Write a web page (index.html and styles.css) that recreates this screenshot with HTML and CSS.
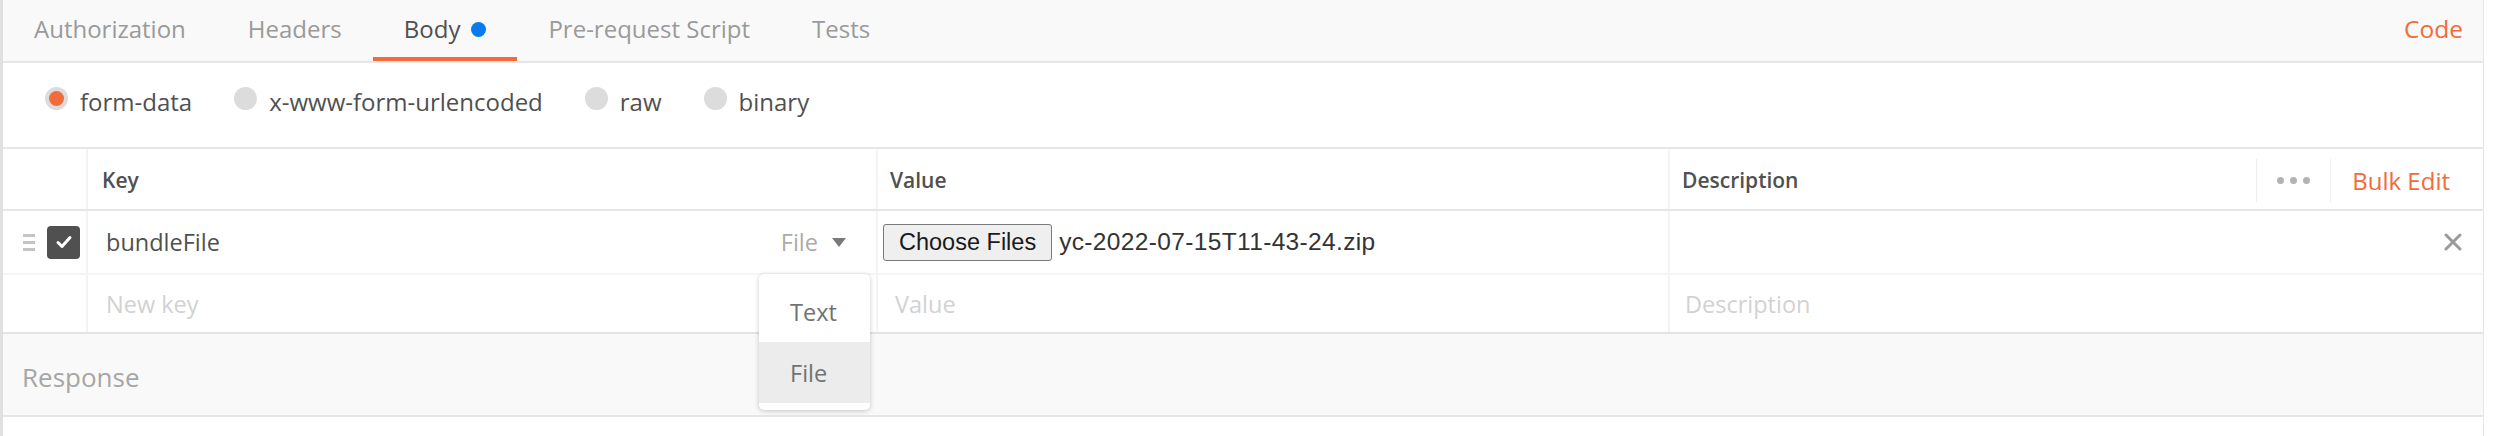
FILE: index.html
```html
<!DOCTYPE html>
<html lang="en">
<head>
<meta charset="utf-8">
<title>Body</title>
<link rel="stylesheet" href="styles.css">
</head>
<body>
<div class="panel">
  <div class="tabs">
    <div class="tab">Authorization</div>
    <div class="tab">Headers</div>
    <div class="tab active">Body<span class="dot"></span></div>
    <div class="tab">Pre-request Script</div>
    <div class="tab">Tests</div>
    <div class="tabs-fill"></div>
    <div class="code">Code</div>
  </div>

  <div class="modes">
    <div class="mode"><span class="radio on"></span>form-data</div>
    <div class="mode"><span class="radio"></span>x-www-form-urlencoded</div>
    <div class="mode"><span class="radio"></span>raw</div>
    <div class="mode"><span class="radio"></span>binary</div>
  </div>

  <div class="kv">
    <div class="row head">
      <div class="cell c0"></div>
      <div class="cell key">Key</div>
      <div class="cell val">Value</div>
      <div class="cell desc">
        <span class="desc-label">Description</span>
        <span class="more"><i></i><i></i><i></i></span>
        <span class="bulk">Bulk Edit</span>
      </div>
    </div>

    <div class="row item">
      <div class="cell c0">
        <span class="handle"><i></i><i></i><i></i></span>
        <span class="check"><svg width="20" height="20" viewBox="0 0 20 20"><path d="M4 10.5l4 4 8-9" fill="none" stroke="#fff" stroke-width="3" stroke-linecap="round" stroke-linejoin="round"/></svg></span>
      </div>
      <div class="cell key">
        <span class="name">bundleFile</span>
        <span class="type">File <svg width="14" height="9" viewBox="0 0 14 9"><path d="M0 0h14L7 9z" fill="#7a7a7a"/></svg></span>
        <div class="menu">
          <div class="menu-item">Text</div>
          <div class="menu-item sel">File</div>
        </div>
      </div>
      <div class="cell val">
        <button class="choose" type="button">Choose Files</button>
        <span class="fname">yc-2022-07-15T11-43-24.zip</span>
      </div>
      <div class="cell desc">
        <span class="x"><svg width="18" height="18" viewBox="0 0 18 18"><path d="M2 2l14 14M16 2L2 16" stroke="#9a9a9a" stroke-width="3" stroke-linecap="round"/></svg></span>
      </div>
    </div>

    <div class="row item new">
      <div class="cell c0"></div>
      <div class="cell key"><span class="ph">New key</span></div>
      <div class="cell val"><span class="ph">Value</span></div>
      <div class="cell desc"><span class="ph">Description</span></div>
    </div>
  </div>

  <div class="response">Response</div>
</div>
</body>
</html>
```

FILE: styles.css
```css
html, body {
  margin: 0;
  padding: 0;
  background: #fff;
}

body {
  font-family: "Open Sans", "Noto Sans", sans-serif;
  color: #505050;
}

.panel {
  width: 2480px;
  height: 436px;
  border-left: 3px solid #e0e0e0;
  border-right: 1px solid #e6e6e6;
  display: flex;
  flex-direction: column;
}

/* ---------- tabs ---------- */
.tabs {
  height: 61px;
  background: #f9f9f9;
  border-bottom: 2px solid #e6e6e6;
  display: flex;
  align-items: stretch;
  flex-shrink: 0;
}

.tab {
  display: flex;
  align-items: center;
  padding: 0 31px;
  font-size: 24px;
  color: #9a9a9a;
  border-bottom: 4px solid transparent;
  white-space: nowrap;
}

.tab.active {
  color: #505050;
  border-bottom-color: #f26b3a;
}

.dot {
  width: 15px;
  height: 15px;
  border-radius: 50%;
  background: #097bed;
  margin-left: 11px;
  margin-top: 2px;
}

.tabs-fill {
  flex: 1;
}

.code {
  display: flex;
  align-items: center;
  padding: 0 20px 4px 0;
  font-size: 24.5px;
  color: #f26b3a;
}

/* ---------- body modes ---------- */
.modes {
  height: 84px;
  display: flex;
  align-items: flex-start;
  padding: 20px 0 0 42px;
  box-sizing: border-box;
  flex-shrink: 0;
}

.mode {
  display: flex;
  align-items: center;
  height: 36px;
  font-size: 24px;
  color: #505050;
  margin-right: 42px;
  white-space: nowrap;
}

.radio {
  width: 23px;
  height: 23px;
  border-radius: 50%;
  background: #dcdcdc;
  margin-right: 12px;
  margin-top: -6px;
  display: flex;
  align-items: center;
  justify-content: center;
}

.radio.on::after {
  content: "";
  width: 15px;
  height: 15px;
  border-radius: 50%;
  background: #f26b3a;
}

/* ---------- key/value table ---------- */
.kv {
  border-top: 2px solid #e6e6e6;
  flex-shrink: 0;
}

.row {
  display: grid;
  grid-template-columns: 85px 790px 792px 1fr;
  box-sizing: border-box;
}

.row.head {
  height: 62px;
  border-bottom: 2px solid #e6e6e6;
}

.row.item {
  height: 64px;
  border-bottom: 2px solid #f5f5f5;
}

.row.new {
  height: 59px;
  border-bottom: 2px solid #e3e3e3;
}

.cell {
  display: flex;
  align-items: center;
  box-sizing: border-box;
  border-right: 2px solid #f3f3f3;
  min-width: 0;
}

.cell.desc {
  border-right: none;
}

.head .cell {
  font-size: 21px;
  font-weight: 600;
  color: #505050;
  padding-top: 2px;
}

.head .key {
  padding-left: 14px;
}

.head .val {
  padding-left: 12px;
}

.head .desc {
  padding-left: 12px;
  padding-right: 33px;
}

.desc-label {
  flex: 1;
}

.more {
  display: flex;
  align-items: center;
  gap: 6px;
  height: 43px;
  padding: 0 20px;
  border-left: 1px solid #eeeeee;
  border-right: 1px solid #eeeeee;
  margin-right: 21px;
}

.more i {
  width: 7px;
  height: 7px;
  border-radius: 50%;
  background: #b3b3b3;
}

.bulk {
  font-weight: 400;
  font-size: 24px;
  color: #f26b3a;
}

/* row cells */
.c0 {
  padding-left: 20px;
  gap: 12px;
}

.handle {
  display: flex;
  flex-direction: column;
  gap: 4px;
  width: 12px;
}

.handle i {
  height: 3px;
  background: #c4c4c4;
}

.check {
  width: 33px;
  height: 33px;
  border-radius: 4px;
  background: #505050;
  display: flex;
  align-items: center;
  justify-content: center;
}

.item .key {
  position: relative;
  padding-left: 18px;
  padding-right: 30px;
  font-size: 23.5px;
}

.name {
  flex: 1;
  color: #505050;
}

.type {
  display: flex;
  align-items: center;
  gap: 14px;
  color: #ababab;
}

.menu {
  position: absolute;
  left: 671px;
  top: 63px;
  width: 111px;
  padding: 7px 0;
  background: #fff;
  border-radius: 5px;
  box-shadow: 0 1px 5px rgba(0, 0, 0, 0.22);
  z-index: 5;
}

.menu-item {
  height: 61px;
  display: flex;
  align-items: center;
  padding-left: 31px;
  font-size: 23.5px;
  color: #727272;
}

.menu-item.sel {
  background: #ececec;
}

.item .val {
  padding-left: 5px;
}

.choose {
  height: 37px;
  padding: 0 15px;
  margin: 0 7px 0 0;
  font-family: "Liberation Sans", Arial, sans-serif;
  font-size: 23.5px;
  color: #1a1a1a;
  background: #efefef;
  border: 1px solid #7a7a7a;
  border-radius: 3px;
}

.fname {
  font-family: "Liberation Sans", Arial, sans-serif;
  font-size: 24.5px;
  color: #333;
  letter-spacing: 0.35px;
}

.item .desc {
  justify-content: flex-end;
  padding-right: 21px;
}

.x {
  display: flex;
}

.new .key {
  padding-left: 18px;
}

.new .val {
  padding-left: 17px;
}

.new .desc {
  justify-content: flex-start;
  padding-left: 15px;
}

.ph {
  font-size: 23.5px;
  color: #d2d2d2;
}

/* ---------- response ---------- */
.response {
  height: 83px;
  box-sizing: border-box;
  background: #f9f9f9;
  border-bottom: 2px solid #e6e6e6;
  display: flex;
  align-items: center;
  padding: 4px 0 0 19px;
  font-size: 26px;
  color: #a6a6a6;
  flex-shrink: 0;
}
```
